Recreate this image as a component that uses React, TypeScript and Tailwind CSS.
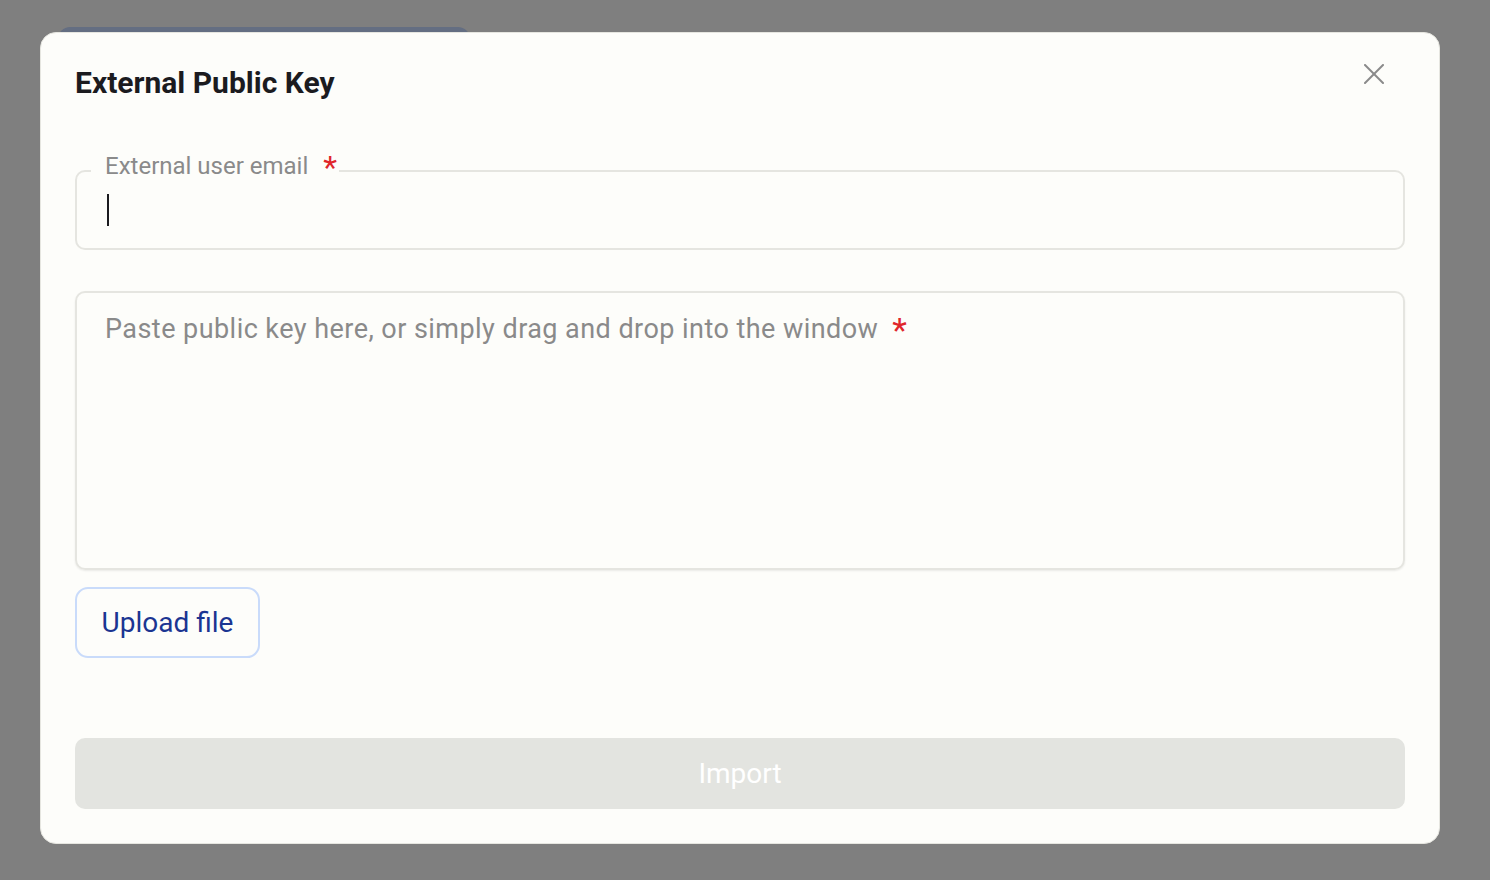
import React from "react";

const CloseIcon = () => (
  <svg width="20" height="20" viewBox="0 0 20 20" fill="none" stroke="#8a8a8a" strokeWidth="2" strokeLinecap="round">
    <path d="M1 1 L19 19" />
    <path d="M19 1 L1 19" />
  </svg>
);

export default function App() {
  return (
    <div className="relative h-[880px] w-full overflow-hidden bg-[#7f7f7f] font-['Roboto','Liberation_Sans',sans-serif]">
      {/* page content behind the overlay */}
      <div className="ml-[58px] mt-[27px] h-[40px] w-[412px] rounded-t-[12px] bg-[#646e82]" />

      <div className="absolute left-[40px] top-[32px] flex h-[812px] w-[1400px] flex-col rounded-[16px] border border-[#e6e6e0] bg-[#fdfdfa] px-[34px] pb-[34px] pt-[32px]">
        <div className="flex items-start justify-between">
          <h2 className="text-[30px] font-bold leading-[36px] text-[#1b1b1f]">
            External Public Key
          </h2>
          <button className="mr-[21px] mt-[-1px]">
            <CloseIcon />
          </button>
        </div>

        <fieldset className="mt-[51px] rounded-[10px] border-2 border-[#e5e5e0]">
          <legend className="ml-[14px] pl-[14px] pr-[2px] pb-[10px] text-[24px] leading-[28px] text-[#8a8a8a]">
            External user email
            <span className="relative top-[1px] ml-[15px] align-top text-[32px] leading-[28px] text-[#e0262b]">*</span>
          </legend>
          <div className="h-[58px] pl-[30px] pt-[4px]">
            <div className="h-[32px] w-[2px] bg-[#1b1b1f]" />
          </div>
        </fieldset>

        <div className="mt-[41px] h-[279px] rounded-[10px] border-2 border-[#e5e5e0] pl-[28px] pt-[20px] shadow-[0_1px_2px_rgba(0,0,0,0.08)]">
          <p className="text-[27px] leading-[32px] tracking-[0.45px] text-[#8a8a8a]">
            Paste public key here, or simply drag and drop into the window
            <span className="relative top-[1px] ml-[14px] align-top text-[34px] leading-[32px] text-[#e0262b]">*</span>
          </p>
        </div>

        <button className="mt-[17px] h-[71px] w-[185px] rounded-[13px] border-2 border-[#c9dbfa] text-[28px] text-[#1b3592]">
          Upload file
        </button>

        <button className="mt-auto h-[71px] w-full rounded-[10px] bg-[#e3e4e0] text-[28px] text-white">
          Import
        </button>
      </div>
    </div>
  );
}
